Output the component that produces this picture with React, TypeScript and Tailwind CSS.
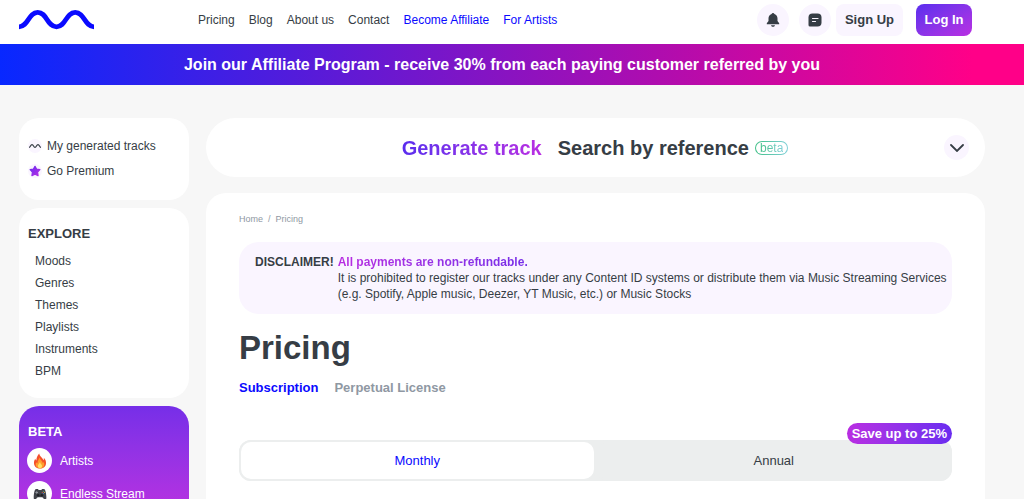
import { useState } from "react"

const navLinks = [
  { label: "Pricing" },
  { label: "Blog" },
  { label: "About us" },
  { label: "Contact" },
  { label: "Become Affiliate", highlight: true },
  { label: "For Artists", highlight: true },
]

const exploreLinks = ["Moods", "Genres", "Themes", "Playlists", "Instruments", "BPM"]

function Logo() {
  return (
    <svg width="75" height="20" viewBox="0 0 75 20" fill="none" aria-hidden="true">
      <path
        d="M0 16.8 C9.300 16.8 9.300 2.400 18.700 2.400 S28 16.8 37.500 16.8 S46.800 2.400 56.200 2.400 S65.700 16.8 75 16.8"
        stroke="#0a0aff"
        strokeWidth="4.800"
      />
    </svg>
  )
}

function BellIcon() {
  return (
    <svg width="14" height="16" viewBox="0 0 14 16" fill="#363d45" aria-hidden="true">
      <path d="M7 1C7.700 1 8.200 1.300 8.400 1.900C10.500 2.500 11.500 4.400 11.500 6.500V9L13.200 11.200V12.300H.8V11.200L2.500 9V6.500C2.500 4.400 3.500 2.500 5.600 1.900C5.800 1.300 6.300 1 7 1Z" />
      <path d="M5 13.300H9C8.700 14.300 7.900 14.800 7 14.800S5.300 14.300 5 13.300Z" />
    </svg>
  )
}

function MessageIcon() {
  return (
    <svg width="14" height="14" viewBox="0 0 14 14" aria-hidden="true">
      <path
        d="M4.500 .5H9.500Q13.500 .5 13.500 4.500V9.500Q13.500 13.500 9.500 13.500H2Q.5 13.500 .5 12V4.500Q.5 .5 4.500 .5Z"
        fill="#363d45"
      />
      <path d="M4.500 5.500H10M4.500 8.500H7.500" stroke="#faf5ff" strokeWidth="1.200" strokeLinecap="round" />
    </svg>
  )
}

function WaveIcon() {
  return (
    <svg width="14" height="14" viewBox="0 0 14 14" fill="none" aria-hidden="true">
      <path d="M1 8.500C2.600 8.500 2.400 5.600 4 5.600S5.500 8.500 7 8.500S8.400 5.600 10 5.600S11.400 8.500 13 8.500" stroke="#363d45" strokeWidth="1.200" />
    </svg>
  )
}

function StarIcon() {
  return (
    <svg width="14" height="14" viewBox="0 0 14 14" aria-hidden="true">
      <defs>
        <linearGradient id="star" x1="0" y1="0" x2="1" y2="1">
          <stop stopColor="#6a2cf0" />
          <stop offset="1" stopColor="#b52de4" />
        </linearGradient>
      </defs>
      <path
        d="M7 2.300L8.600 5.100L11.900 5.700L9.600 8.200L10.100 11.600L7 10.100L3.900 11.600L4.400 8.200L2.100 5.700L5.400 5.100Z"
        fill="url(#star)"
        stroke="url(#star)"
        strokeWidth="1.200"
        strokeLinejoin="round"
      />
    </svg>
  )
}

function FireIcon() {
  return (
    <svg width="14" height="16" viewBox="0 0 14 16" aria-hidden="true">
      <path d="M6.200 .5C6.600 3.500 9.800 4.800 10.300 7.200C10.900 6.700 11 5.600 10.800 4.700C12.300 6.200 13.300 8.200 13 10.500C12.700 13.700 10.300 15.500 7 15.500S1.200 13.600 1 10.500C.8 8.500 1.600 7 2.200 5.800C2.500 6.700 2.800 7.200 3.400 7.500C3.300 4.800 4.500 2.300 6.200 .5Z" fill="#f4502a" />
      <path d="M6.600 4.500C7.200 7 9.700 8 9.900 10.200C10.400 9.800 10.600 9.300 10.600 8.700C11.700 10.300 11.700 13 9.800 14.500C8.200 15.700 5.500 15.600 4 14.300C2.500 13 2.300 10.800 3.200 9.200C3.500 9.900 4 10.200 4.500 10.200C4.400 8.200 5.600 6.700 6.600 4.500Z" fill="#ff9d2e" />
      <path d="M7 9C7.200 10.800 9.300 11.500 9 13.300C8.800 14.700 7.900 15.200 6.900 15.200S4.900 14.400 4.900 13.100C4.900 11.500 6.500 10.600 7 9Z" fill="#ffe063" />
    </svg>
  )
}

function GamepadIcon() {
  return (
    <svg width="14" height="14" viewBox="0 0 14 14" aria-hidden="true">
      <path d="M3.200 2H5L5.600 2.900H8.400L9 2H10.800C12 2 12.600 4 13 6.500S13.800 13 12.300 13C11 13 10.300 10.200 9 10.200H5C3.700 10.200 3 13 1.700 13S.6 9 1 6.500S2 2 3.200 2Z" fill="#40434a" />
      <path d="M2.400 5.500H5M3.700 4.200V6.800" stroke="#9599a0" strokeWidth=".9" />
      <circle cx="5.200" cy="8.200" r="1.300" fill="#1f2125" />
      <circle cx="8.800" cy="8.200" r="1.300" fill="#1f2125" />
      <circle cx="10.400" cy="4.300" r=".6" fill="#4fa36c" />
      <circle cx="10.400" cy="6.500" r=".6" fill="#4c7fd0" />
      <circle cx="9.300" cy="5.400" r=".6" fill="#c5504c" />
      <circle cx="11.500" cy="5.400" r=".6" fill="#d0a84a" />
    </svg>
  )
}

function Header() {
  return (
    <header className="flex h-11 items-start bg-white pl-[19px] pr-[52px]">
      <a href="#" aria-label="Home page" className="mt-[10px] w-[179px] shrink-0">
        <Logo />
      </a>
      <nav className="mt-3 flex gap-[14px] text-xs whitespace-nowrap">
        {navLinks.map((link) => (
          <a key={link.label} href="#" className={link.highlight ? "text-[#0a0aff]" : ""}>
            {link.label}
          </a>
        ))}
      </nav>
      <div className="mt-1 ml-auto flex text-[13px] font-bold">
        <button aria-label="Notifications" className="mr-[10px] flex size-8 items-center justify-center rounded-full bg-[#faf5ff]">
          <BellIcon />
        </button>
        <button aria-label="Messages" className="mr-[5px] flex size-8 items-center justify-center rounded-full bg-[#faf5ff]">
          <MessageIcon />
        </button>
        <button className="mr-[13px] h-8 w-[67px] rounded-lg bg-[#faf5ff]">Sign Up</button>
        <button className="h-8 w-14 rounded-lg bg-linear-to-br from-[#5a2cee] to-[#b92de2] text-white">Log In</button>
      </div>
    </header>
  )
}

function Sidebar() {
  return (
    <aside className="flex w-[170px] shrink-0 flex-col gap-2 text-xs">
      <div className="flex h-[82px] flex-col gap-[9px] rounded-[20px] bg-white px-[9px] pt-5">
        <a href="#" className="flex items-center gap-[5px] whitespace-nowrap">
          <span className="rounded-full bg-[#faf5ff]">
            <WaveIcon />
          </span>
          My generated tracks
        </a>
        <a href="#" className="flex items-center gap-[5px]">
          <span className="rounded-full bg-[#faf5ff]">
            <StarIcon />
          </span>
          Go Premium
        </a>
      </div>

      <div className="rounded-[20px] bg-white px-[9px] pt-[18px] pb-4">
        <h2 className="mb-2 text-[13px] leading-4 font-bold">EXPLORE</h2>
        <ul className="pl-[7px] leading-[22px]">
          {exploreLinks.map((name) => (
            <li key={name}>
              <a href="#">{name}</a>
            </li>
          ))}
        </ul>
      </div>

      <div className="rounded-[20px] bg-linear-to-b from-[#762ee8] to-[#c42ddf] px-2 pt-[18px] pb-6 text-white">
        <h2 className="mb-2 pl-px text-[13px] leading-4 font-bold">BETA</h2>
        <ul className="flex flex-col gap-2">
          <li>
            <a href="#" className="flex items-center gap-2">
              <span className="flex size-[25px] items-center justify-center rounded-full bg-white">
                <FireIcon />
              </span>
              Artists
            </a>
          </li>
          <li>
            <a href="#" className="flex items-center gap-2">
              <span className="flex size-[25px] items-center justify-center rounded-full bg-white">
                <GamepadIcon />
              </span>
              Endless Stream
            </a>
          </li>
        </ul>
      </div>
    </aside>
  )
}

function SearchBar() {
  return (
    <div className="flex h-[59px] items-center rounded-full bg-white pr-4 pl-10 text-xl font-bold">
      <div className="flex flex-1 items-center justify-center whitespace-nowrap">
        <button className="mr-4 bg-linear-to-r from-[#5a2cee] to-[#b92de2] bg-clip-text text-transparent">Generate track</button>
        <button>Search by reference</button>
        <span className="ml-[6px] rounded-full bg-linear-to-r from-[#3fbf86] to-[#7fd0d8] p-px text-xs leading-3 font-normal">
          <span className="block rounded-full bg-white px-1">
            <span className="bg-linear-to-r from-[#3fbf86] to-[#7fd0d8] bg-clip-text text-transparent">beta</span>
          </span>
        </span>
      </div>
      <button aria-label="Expand" className="flex size-[25px] items-center justify-center rounded-full bg-[#faf5ff]">
        <svg width="14" height="8" viewBox="0 0 14 8" fill="none" aria-hidden="true">
          <path d="M1 1L7 7L13 1" stroke="#363d45" strokeWidth="1.800" strokeLinecap="round" />
        </svg>
      </button>
    </div>
  )
}

function PricingCard() {
  const [period, setPeriod] = useState<"monthly" | "annual">("monthly")

  return (
    <section className="rounded-t-[20px] bg-white px-[33px] pt-5 pb-16">
      <nav aria-label="Breadcrumb" className="flex gap-[5px] text-[9px] leading-3 text-[#8f98a3]">
        <a href="#">Home</a>
        <span>/</span>
        <a href="#">Pricing</a>
      </nav>

      <div className="mt-[17px] flex gap-1 rounded-[20px] bg-[#faf5ff] py-3 pr-1 pl-4 text-xs">
        <strong>DISCLAIMER!</strong>
        <div>
          <strong className="inline-block bg-linear-to-r from-[#b92de2] to-[#762ee8] bg-clip-text align-top text-transparent">
            All payments are non-refundable.
          </strong>
          <p>
            It is prohibited to register our tracks under any Content ID systems or distribute them via Music Streaming Services
            <br />
            (e.g. Spotify, Apple music, Deezer, YT Music, etc.) or Music Stocks
          </p>
        </div>
      </div>

      <h1 className="mt-[14px] text-[33px] leading-10 font-bold">Pricing</h1>

      <div className="mt-3 flex gap-4 text-[13px] leading-4 font-bold">
        <button className="text-[#0a0aff]">Subscription</button>
        <button className="text-[#8f98a3]">Perpetual License</button>
      </div>

      <div className="relative mt-11 grid h-[41px] grid-cols-2 rounded-xl bg-[#eceeee] text-[13px]">
        <button
          onClick={() => setPeriod("monthly")}
          className={`rounded-xl border-2 border-[#eceeee] ${period === "monthly" ? "bg-white text-[#0a0aff]" : ""}`}
        >
          Monthly
        </button>
        <button
          onClick={() => setPeriod("annual")}
          className={`rounded-xl border-2 border-[#eceeee] ${period === "annual" ? "bg-white text-[#0a0aff]" : ""}`}
        >
          Annual
        </button>
        <span className="absolute right-0 bottom-full -mb-1 rounded-full bg-linear-to-r from-[#b92de2] to-[#6a2cf0] px-[5px] leading-[21px] font-bold text-white">
          Save up to 25%
        </span>
      </div>
    </section>
  )
}

export default function App() {
  return (
    <div className="h-screen overflow-hidden bg-[#f7f7f7] font-['Liberation_Sans',Arial,sans-serif] text-[#363d45]">
      <Header />
      <div className="bg-linear-to-r/srgb from-[#0828ff] to-[#ff0088] to-95% pr-5 text-center leading-[41px] font-bold text-white">
        Join our Affiliate Program - receive 30% from each paying customer referred by you
      </div>
      <div className="flex gap-[17px] pt-[33px] pr-[39px] pl-[19px]">
        <Sidebar />
        <main className="flex min-w-0 flex-1 flex-col gap-4">
          <SearchBar />
          <PricingCard />
        </main>
      </div>
    </div>
  )
}
